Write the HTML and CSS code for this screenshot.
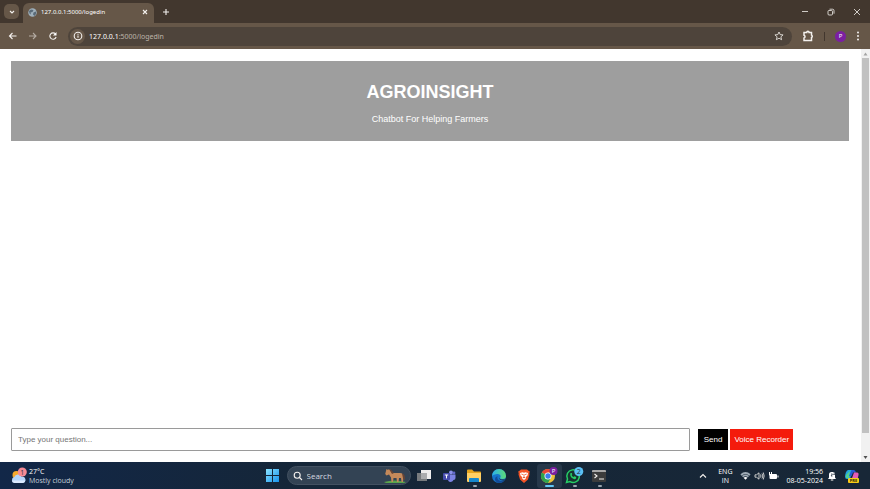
FILE: index.html
```html
<!DOCTYPE html>
<html lang="en">
<head>
<meta charset="utf-8">
<title>127.0.0.1:5000/logedin</title>
<link rel="stylesheet" href="styles.css">
</head>
<body>
<div class="tabstrip">
  <button class="tab-search" aria-label="Search tabs"><svg width="8" height="8" viewBox="0 0 8 8"><path d="M2 3l2 2 2-2" class="line"/></svg></button>
  <div class="tab">
    <svg width="9" height="9" viewBox="0 0 18 18"><circle cx="9" cy="9" r="8.500" fill="#9fb0bb"/><path d="M2 6l4-3 5 1-2 4-4 1 1 4-3-2zM11 9l5-2v5l-3 4-3-3z" fill="#596a78"/></svg>
    <span class="tab-title">127.0.0.1:5000/logedin</span>
    <button class="plain" aria-label="Close tab"><svg width="8" height="8" viewBox="0 0 8 8"><path d="M2 2l4 4M6 2l-4 4" class="line"/></svg></button>
  </div>
  <button class="plain new-tab" aria-label="New tab"><svg width="8" height="8" viewBox="0 0 8 8"><path d="M4 1v6M1 4h6" class="line"/></svg></button>
  <div class="window-buttons">
    <button class="plain" aria-label="Minimize"><svg width="8" height="8" viewBox="0 0 8 8"><path d="M1 3.500h6" class="line thin"/></svg></button>
    <button class="plain" aria-label="Restore"><svg width="8" height="8" viewBox="0 0 8 8"><rect x="1" y="2.500" width="4.500" height="4.500" rx="1" class="line thin"/><path d="M2.500 1.200h3a1.500 1.500 0 0 1 1.500 1.500v3" class="line thin"/></svg></button>
    <button class="plain" aria-label="Close"><svg width="8" height="8" viewBox="0 0 8 8"><path d="M1 1l6 6M7 1L1 7" class="line thin"/></svg></button>
  </div>
</div>
<div class="toolbar">
  <button class="plain" aria-label="Back"><svg width="10" height="10" viewBox="0 0 10 10"><path d="M8.500 5H1.500M4.500 2l-3 3 3 3" class="line"/></svg></button>
  <button class="plain dim" aria-label="Forward"><svg width="10" height="10" viewBox="0 0 10 10"><path d="M1 5h7M5 2l3 3-3 3" class="line"/></svg></button>
  <button class="plain" aria-label="Reload"><svg width="10" height="10" viewBox="0 0 10 10"><path d="M7.500 3a3.200 3.200 0 1 0 .6 3" class="line"/><path d="M8.500 1v3.500H5z" fill="#fff"/></svg></button>
  <div class="address">
    <span class="info"><svg width="10" height="10" viewBox="0 0 10 10"><circle cx="5" cy="5" r="3.800" class="line"/><path d="M5 4.600v2.200M5 2.800v.9" class="line"/></svg></span>
    <span class="url"><b>127.0.0.1</b>:5000/logedin</span>
    <button class="plain" aria-label="Bookmark"><svg width="10" height="10" viewBox="0 0 10 10"><path d="M5 1l1.200 2.600 2.900.3-2.200 1.900.7 2.900L5 7.200 2.400 8.700l.7-2.900L.9 3.900l2.900-.3z" class="line thin"/></svg></button>
  </div>
  <button class="plain ext" aria-label="Extensions"><svg width="12" height="12" viewBox="0 0 12 12"><path d="M2 2.500h2.700a1.200 1.200 0 0 1 2.400 0h2.400v2.600a1.300 1.300 0 0 1 0 2.400v3H2V8a1.400 1.400 0 0 0 0-2.700z" class="line bold"/></svg></button>
  <span class="divider"></span>
  <button class="avatar" aria-label="Profile">P</button>
  <button class="plain menu" aria-label="Menu"><svg width="6" height="12" viewBox="0 0 6 12"><g fill="#fff"><circle cx="3" cy="2.500" r=".9"/><circle cx="3" cy="6" r=".9"/><circle cx="3" cy="9.500" r=".9"/></g></svg></button>
</div>
<div class="viewport">
  <main class="page">
    <header class="banner">
      <h1>AGROINSIGHT</h1>
      <p>Chatbot For Helping Farmers</p>
    </header>
    <form class="ask">
      <input type="text" placeholder="Type your question..." aria-label="Type your question">
      <button type="button" class="send">Send</button>
      <button type="button" class="voice">Voice Recorder</button>
    </form>
  </main>
  <div class="scrollbar">
    <svg width="9" height="9" viewBox="0 0 9 9"><path d="M2.500 6.500l2-3 2 3z" fill="#a3a3a3"/></svg>
    <div class="track"><div class="thumb"></div></div>
    <svg width="9" height="9" viewBox="0 0 9 9"><path d="M2.500 3l2 3 2-3z" fill="#505050"/></svg>
  </div>
</div>
<footer class="taskbar">
  <div class="weather">
    <svg width="16" height="18" viewBox="0 0 16 18"><circle cx="5.500" cy="8" r="4" fill="#f7a92c"/><path d="M3.500 16a3 3 0 0 1-.2-5.900A4 4 0 0 1 10.500 9.500a3.300 3.300 0 0 1 1.300 6.500z" fill="#b5d4fa"/><path d="M.8 13.500h13.500a3 3 0 0 1-2.500 2.500H3.500a3 3 0 0 1-2.700-2.500z" fill="#dceaff"/><circle cx="11.300" cy="5" r="4.500" fill="#f58a95"/><text x="11.300" y="7.500" class="badge-dark">1</text></svg>
    <div><div>27°C</div><div class="muted">Mostly cloudy</div></div>
  </div>
  <div class="apps">
    <button class="plain start" aria-label="Start"><svg width="15" height="15" viewBox="0 0 15 15"><defs><linearGradient id="win" x2="1" y2="1"><stop stop-color="#8be3ff"/><stop offset="1" stop-color="#1794ee"/></linearGradient></defs><path d="M1 1h6v6H1zM8 1h6v6H8zM1 8h6v6H1zM8 8h6v6H8z" fill="url(#win)"/></svg></button>
    <label class="search">
      <svg width="10" height="10" viewBox="0 0 10 10"><circle cx="4.200" cy="4.200" r="3" class="line"/><path d="M6.500 6.500L9 9" class="line"/></svg>
      <input type="text" placeholder="Search">
      <svg width="24" height="16" viewBox="0 0 24 16"><path d="M1 14q10-3 22 0l-2 1H3z" fill="#5aa64b"/><path d="M3.500 1L5 2l1-1 3.500 4H17q3.500 0 3.500 3.500L20 14h-1.500L18 10h-2l-.5 4H14l-.5-4h-3L10 14H8.500L8 9.500 6 6.500 3.500 7.500 2.200 6z" fill="#c4895a"/><path d="M6 1l1.500.3L11 5 9 6zM19 5.500q3.500 0 3 6.500l-1.800-1z" fill="#644437"/></svg>
    </label>
    <button class="app" aria-label="Task view"><svg width="16" height="16" viewBox="0 0 16 16"><path d="M5 2h10v9H5z" fill="#ededed"/><path d="M1 5h10v8H1z" fill="#777b7e"/><path d="M5 5h6v6H5z" fill="#aaacae"/></svg></button>
    <button class="app" aria-label="Teams"><svg width="16" height="16" viewBox="0 0 16 16"><circle cx="10" cy="4.500" r="2" fill="#8b91ea"/><circle cx="13" cy="5" r="1.400" fill="#6068ca"/><path d="M7 6.500h7.500V10q0 2-2 2-1 2-3 2-2.500 0-2.500-3z" fill="#7c83e4"/><rect x="2" y="5" width="7" height="7" rx="1" fill="#454bad"/><path d="M3.800 7h3.400M5.500 7v3.400" stroke="#fff"/></svg></button>
    <button class="app running" aria-label="File Explorer"><svg width="16" height="16" viewBox="0 0 16 16"><path d="M1 2.500q0-1 1-1h4l2 2h6q1 0 1 1V8H1z" fill="#e5a41d"/><path d="M1 5h14v8q0 1-1 1H2q-1 0-1-1z" fill="#ffd064"/><path d="M3 14v-3q0-1 1-1h8q1 0 1 1v3z" fill="#1688cd"/></svg></button>
    <button class="app" aria-label="Edge"><svg width="16" height="16" viewBox="0 0 16 16"><defs><linearGradient id="edge" x2="1"><stop stop-color="#2bb1ed"/><stop offset="1" stop-color="#5ddb74"/></linearGradient></defs><circle cx="8" cy="8" r="7" fill="#1675cb"/><path d="M1 8a7 7 0 0 1 14 0q0 3-3.500 3-2.500 0-2.500-1 1-1 .5-2.500Q8.500 5.500 6 6 2 6.500 1 8z" fill="url(#edge)"/><path d="M6.500 8q-1 4 3 5 2.500.5 4.500-1.500-2 3.500-6 3.500-4-1-4-4 0-2 2.500-3z" fill="#124c99"/><path d="M8.500 7.500q-1.500 2 .5 3.500 2 1 5 .2l-1 1.300q-4 .3-5-2-.5-2 .5-3z" fill="#182a3b"/></svg></button>
    <button class="app" aria-label="Brave"><svg width="16" height="16" viewBox="0 0 16 16"><path d="M5 1.500h6l1.500 1.200 1.300.8-.5 2 .2 1-1.500 5L8 15l-4-3.500-1.500-5 .2-1-.5-2 1.300-.8z" fill="#f35427"/><path d="M4 5l2.500-.8L8 4.800l1.500-.6L12 5l-.5 2.500-1.800 1.700.5 1L8 12l-2.200-1.800.5-1L4.500 7.500z" fill="#fff"/><path d="M5.300 6l1.800.7M10.700 6l-1.800.7M8 6v3M6.700 10L8 9.300l1.300.7" stroke="#f35427" stroke-width=".8"/></svg></button>
    <button class="app running active" aria-label="Chrome"><svg width="20" height="18" viewBox="0 0 20 18"><circle cx="9" cy="9" r="7" fill="#ecc23a"/><path d="M9 9L2.900 5.500A7 7 0 0 1 15.100 5.500H9z" fill="#e64435"/><path d="M2.900 5.500A7 7 0 0 0 9 16l3-5.200L9 9z" fill="#2ca34e"/><circle cx="9" cy="9" r="3.500" fill="#fff"/><circle cx="9" cy="9" r="2.700" fill="#3b7eea"/><circle cx="14.500" cy="4" r="4" fill="#7b1fa2"/><text x="14.500" y="6" class="badge-light">P</text></svg></button>
    <button class="app running" aria-label="WhatsApp"><svg width="20" height="18" viewBox="0 0 20 18"><path d="M2.500 15.500l1-3.500A6.300 6.300 0 1 1 6 14.600z" fill="#17342f" stroke="#26cf66" stroke-width="1.500"/><path d="M6.500 6q-1 3 1.500 5t4 .5l.2-1.500-1.700-.7-1 .8Q8 9.300 7.600 8l.7-.7L7.700 6z" fill="#26cf66"/><circle cx="14.800" cy="4.500" r="4.500" fill="#5bc0f3"/><text x="14.800" y="7" class="badge-dark">2</text></svg></button>
    <button class="app running" aria-label="Terminal"><svg width="16" height="16" viewBox="0 0 16 16"><rect x="1" y="2" width="14" height="12" rx="1" fill="#3c3c3c"/><path d="M1 4V3q0-1 1-1h12q1 0 1 1v1z" fill="#a8a8a8"/><path d="M3.500 6l2.500 2-2.500 2M8 11h5" class="line"/></svg></button>
  </div>
  <div class="tray">
    <button class="plain" aria-label="Hidden icons"><svg width="8" height="8" viewBox="0 0 8 8"><path d="M1 5.500l3-3 3 3" class="line"/></svg></button>
    <div class="lang"><div>ENG</div><div>IN</div></div>
    <div class="status">
      <svg width="11" height="10" viewBox="0 0 11 10"><path d="M1 4q4.500-4 9 0M2.500 5.700q3-2.700 6 0" fill="none" stroke="#9daab5" stroke-width="1.700"/><path d="M3.500 6.800q2-1.500 4 0l-2 2z" fill="#fff"/></svg>
      <svg width="11" height="10" viewBox="0 0 11 10"><path d="M1 3.800h1.500L5 1.800v6.400L2.500 6.200H1zM6.500 3.500q1 1.500 0 3M8 2.500q1.700 2.500 0 5M9.300 1.500q1.700 3.500 0 7" class="line thin"/></svg>
      <svg width="11" height="10" viewBox="0 0 11 10"><rect x="1.500" y="3" width="7.500" height="5" rx="1" fill="#fff"/><path d="M9.500 4.500h1v2h-1zM1 1h1v2h1V1h1v3L2.500 5 1 4z" fill="#fff"/></svg>
    </div>
    <div class="clock"><div>19:56</div><div>08-05-2024</div></div>
    <svg width="10" height="12" viewBox="0 0 10 12"><path d="M1 9l1-1.500V4.500q0-2.500 2.500-2.500H8v5.500L9 9z" fill="#fff"/><path d="M3.800 10h2.500" class="line"/><path d="M4 4h1.500L4 6h1.500M6.500 2.500H8L6.500 4.500H8" stroke="#1b2a3a" stroke-width=".7" fill="none"/></svg>
    <button class="plain copilot" aria-label="Copilot"><svg width="16" height="16" viewBox="0 0 16 16"><path d="M4 2h4.500L6 11H3Q1 11 1 8.500 1.500 3 4 2z" fill="#22a6de"/><path d="M2 7l4-4-1 7H2z" fill="#54cf8c"/><path d="M7.500 2H10q1.500 0 2 2.500H9L7.500 8H5z" fill="#2459d6"/><path d="M10 4.500h3q2 0 1.500 2.500-1 6-3 6H7z" fill="#e45bb6"/><rect x="4" y="10" width="11" height="5" rx="1" fill="#f8cc17"/><text x="9.500" y="14" class="pre">PRE</text></svg></button>
  </div>
</footer>
</body>
</html>
```

FILE: styles.css
```css
* { box-sizing: border-box; }

body {
  margin: 0;
  height: 100vh;
  display: flex;
  flex-direction: column;
  overflow: hidden;
  background: #fff;
  color: #fff;
  font: 7px/9px "Open Sans", "Noto Sans", sans-serif;
}

svg { display: block; flex: none; }
button, input { font: inherit; color: inherit; }
button { border: 0; padding: 0; }
.plain { background: none; }
.line { fill: none; stroke: #f4f1ee; stroke-width: 1.100; }
.thin { stroke-width: .8; }
.bold { stroke-width: 1.500; }
.dim { opacity: .55; }

.tabstrip {
  height: 23px;
  flex: none;
  display: flex;
  align-items: center;
  padding: 0 9px 0 4px;
  background: #42372e;
}
.tab-search {
  width: 15px;
  height: 15px;
  display: grid;
  place-items: center;
  border-radius: 5px;
  background: #665748;
}
.tab {
  align-self: flex-end;
  width: 131px;
  height: 20px;
  margin-left: 4px;
  padding: 0 5px 2px;
  display: flex;
  align-items: center;
  gap: 4px;
  border-radius: 6px 6px 0 0;
  background: #665748;
}
.tab-title { flex: 1; font-family: "Noto Sans", sans-serif; font-size: 6px; white-space: nowrap; }
.new-tab { margin-left: 8px; }
.window-buttons { margin-left: auto; display: flex; gap: 18px; }

.toolbar {
  height: 26px;
  flex: none;
  display: flex;
  align-items: center;
  gap: 10px;
  padding: 0 9px 0 8px;
  background: #665748;
}
.address {
  flex: 1;
  height: 19px;
  display: flex;
  align-items: center;
  gap: 4px;
  padding: 0 8px 0 2px;
  border-radius: 10px;
  background: #4e443b;
}
.info {
  width: 15px;
  height: 15px;
  display: grid;
  place-items: center;
  border-radius: 50%;
  background: #665748;
}
.url { flex: 1; font-family: "Noto Sans", sans-serif; font-size: 7px; color: #bdb4aa; }
.url b { font-weight: 400; color: #fff; }
.divider { width: 1px; height: 9px; background: #42372e; }
.avatar {
  width: 11px;
  height: 11px;
  margin-right: -1px;
  border-radius: 50%;
  background: #7b1fa2;
  font-size: 6px;
  line-height: 11px;
}

.viewport { flex: 1; min-height: 0; display: flex; }
.page {
  flex: 1;
  display: flex;
  flex-direction: column;
  justify-content: space-between;
  padding: 12px 12px 11px 11px;
  font-family: "Liberation Sans", Arial, sans-serif;
}
.banner {
  padding: 20px 12px 15px;
  background: #9e9e9e;
  text-align: center;
}
.banner h1 { margin: 0 0 9px; font-size: 18px; line-height: 22px; }
.banner p { margin: 0; font-size: 9px; line-height: 14px; }
.ask { display: flex; align-items: center; font-size: 8px; }
.ask input {
  width: 81%;
  height: 23px;
  margin-right: 8px;
  padding: 0 6px;
  border: 1px solid #9a9a9a;
  border-radius: 1px;
  background: #fff;
  color: #222;
}
.ask input::placeholder { color: #757575; opacity: 1; }
.ask button { height: 21px; padding: 0 6px; white-space: nowrap; }
.ask .send { margin-right: 2px; background: #000; }
.ask .voice { padding: 0 4px; background: #f41b0c; }

.scrollbar {
  width: 9px;
  display: flex;
  flex-direction: column;
  background: #f1f1f1;
}
.track { flex: 1; padding: 0 1px; }
.thumb { height: 95%; background: #c1c1c1; }

.taskbar {
  height: 27px;
  flex: none;
  display: grid;
  grid-template-columns: 1fr auto 1fr;
  align-items: center;
  padding: 0 5px 0 11px;
  background: linear-gradient(90deg, #122748, #152638 35%, #182737);
}
.weather { display: flex; align-items: center; gap: 2px; }
.muted { color: #c5ced9; }
.apps { display: flex; align-items: center; }
.search {
  width: 124px;
  height: 19px;
  display: flex;
  align-items: center;
  gap: 4px;
  margin: 0 1px 0 7px;
  padding: 0 3px 0 5px;
  border: 1px solid #435161;
  border-radius: 10px;
  background: #334354;
}
.search input {
  flex: 1;
  min-width: 0;
  padding: 0;
  border: 0;
  background: none;
  font-size: 8px;
}
.search input::placeholder { color: #d5dae0; opacity: 1; }
.app {
  position: relative;
  width: 25px;
  height: 24px;
  display: grid;
  place-items: center;
  border-radius: 3px;
  background: none;
}
.running::after {
  content: "";
  position: absolute;
  bottom: 1px;
  left: 11px;
  width: 4px;
  height: 2px;
  border-radius: 1px;
  background: #9aa4ae;
}
.active { background: #27384a; }
.active::after { left: 8px; width: 9px; background: #60c5f5; }
.badge-dark { font-size: 7px; text-anchor: middle; fill: #22303d; }
.badge-light { font-size: 6px; text-anchor: middle; fill: #fff; }
.pre { font-size: 4px; font-weight: 700; text-anchor: middle; fill: #29250c; }

.tray {
  display: flex;
  align-items: center;
  justify-content: flex-end;
  padding-right: 5px;
}
.lang { margin: 0 8px 0 11px; text-align: center; }
.status { display: flex; gap: 3px; margin-right: 7px; }
.clock { margin-right: 4px; text-align: right; }
.copilot { margin-left: 7px; }
```
